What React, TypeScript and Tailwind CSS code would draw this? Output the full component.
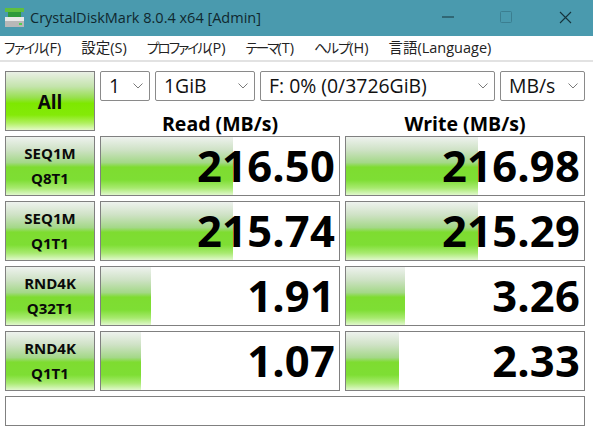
const FONT = "font-['Open_Sans','Noto_Sans_CJK_JP',sans-serif]";
const GRAD = "bg-[linear-gradient(180deg,#eef2ee_0%,#cfe2c6_22%,#a4d888_44%,#7edc30_52%,#7ede34_74%,#a8ea70_88%,#e0f8cc_100%)]";
const GRAD_ALL = "bg-[linear-gradient(180deg,#eaf0e6_0%,#c4e4ac_25%,#98e050_44%,#7ee800_54%,#84ea08_74%,#b0f060_88%,#e4fac8_100%)]";

function Chevron() {
  return (
    <svg width="10" height="6" viewBox="0 0 10 6" className="shrink-0">
      <path d="M0.5 0.5L5 5L9.5 0.5" fill="none" stroke="#7a7a7a" strokeWidth="1" />
    </svg>
  );
}

function Combo({ label, className }: { label: string; className: string }) {
  return (
    <div className={`h-[30px] flex items-center justify-between bg-white border border-[#8a8a8a] rounded-[2px] pl-[8px] pr-[6px] text-[19.4px] text-[#111] ${className}`}>
      <span>{label}</span>
      <Chevron />
    </div>
  );
}

function Cell({ value, bar }: { value: string; bar: number }) {
  return (
    <div className="relative h-[60px] border border-[#808080] bg-white flex items-center justify-end overflow-hidden">
      <div className={`absolute left-0 top-0 bottom-0 ${GRAD}`} style={{ width: bar }} />
      <span className="relative text-[43.5px] leading-none font-bold text-black pr-[4px] tracking-[0.2px]">{value}</span>
    </div>
  );
}

function Label({ a, b }: { a: string; b: string }) {
  return (
    <div className={`h-[60px] border border-[#808080] flex flex-col items-center justify-center text-[15px] leading-[25px] font-bold text-[#0a0a0a] ${GRAD}`}>
      <span className="-mt-[1px]">{a}</span>
      <span>{b}</span>
    </div>
  );
}

const rows = [
  { a: "SEQ1M", b: "Q8T1", r: "216.50", rb: 132, w: "216.98", wb: 132 },
  { a: "SEQ1M", b: "Q1T1", r: "215.74", rb: 132, w: "215.29", wb: 132 },
  { a: "RND4K", b: "Q32T1", r: "1.91", rb: 50, w: "3.26", wb: 59 },
  { a: "RND4K", b: "Q1T1", r: "1.07", rb: 40, w: "2.33", wb: 53 },
];

const menus = [
  { k: "ファイル", l: "(F)", c: "text-[13.5px] tracking-[-1.4px]" },
  { k: "設定", l: "(S)", c: "" },
  { k: "プロファイル", l: "(P)", c: "text-[13.5px] tracking-[-1.8px]" },
  { k: "テーマ", l: "(T)", c: "text-[13.5px] tracking-[-1.9px]" },
  { k: "ヘルプ", l: "(H)", c: "text-[13.5px] tracking-[-1.2px]" },
  { k: "言語", l: "(Language)", c: "" },
];

export default function App() {
  return (
    <div className={`w-[593px] h-[434px] bg-white overflow-hidden flex flex-col ${FONT}`}>
      <div className="h-[36px] bg-[#4a9aae] flex items-center text-[#10282e] shrink-0">
        <svg width="20" height="22" viewBox="0 0 20 22" className="ml-[5px] mr-[5px]">
          <rect x="0" y="1" width="19" height="4" fill="#5fbf3f" />
          <rect x="3" y="5" width="13" height="5" fill="#2f9a3a" />
          <rect x="0" y="10" width="19" height="4" fill="#e8e8e8" />
          <rect x="0" y="14" width="19" height="6" fill="#b8b8b8" />
          <rect x="14" y="16" width="3" height="2" fill="#50d050" />
        </svg>
        <span className="text-[14.5px]">CrystalDiskMark 8.0.4 x64 [Admin]</span>
        <div className="ml-auto flex items-center mb-[2px]">
          <svg width="14" height="14" viewBox="0 0 14 14"><path d="M1 7H13" stroke="#16343c" strokeWidth="1" /></svg>
          <svg width="12" height="12" viewBox="0 0 12 12" className="ml-[45px]"><rect x="0.5" y="0.5" width="11" height="11" rx="1" fill="none" stroke="#3b7e90" strokeWidth="1" /></svg>
          <svg width="13" height="13" viewBox="0 0 13 13" className="ml-[47px] mr-[21px]"><path d="M1 1L12 12M12 1L1 12" stroke="#16343c" strokeWidth="1.1" /></svg>
        </div>
      </div>
      <div className="h-[26px] shrink-0 flex items-center border-b-2 border-[#e2e2e2] text-[14.5px] text-[#222] pl-[4px] gap-[20px] [font-feature-settings:'palt']">
        {menus.map((m) => (
          <span key={m.k} className="whitespace-nowrap">
            <span className={m.c}>{m.k}</span>
            {m.l}
          </span>
        ))}
      </div>
      <div className="grid grid-cols-[90px_240px_240px] gap-x-[5px] pl-[5px] pt-[9px]">
        <div className={`h-[60px] border border-[#808080] flex items-center justify-center pt-[3px] text-[19px] font-bold text-[#0a0a0a] ${GRAD_ALL}`}>All</div>
        <div className="col-span-2 flex flex-col">
          <div className="flex gap-[5px]">
            <Combo label="1" className="w-[50px]" />
            <Combo label="1GiB" className="w-[100px]" />
            <Combo label="F: 0% (0/3726GiB)" className="w-[235px]" />
            <Combo label="MB/s" className="w-[85px]" />
          </div>
          <div className="grid grid-cols-2 gap-x-[5px] h-[30px] items-center pt-[13px] text-center text-[19.5px] leading-none font-bold text-black">
            <span>Read (MB/s)</span>
            <span>Write (MB/s)</span>
          </div>
        </div>
      </div>
      <div className="grid grid-cols-[90px_240px_240px] gap-[5px] pl-[5px] pt-[5px]">
        {rows.map((r) => (
          <div key={r.a + r.b} className="contents">
            <Label a={r.a} b={r.b} />
            <Cell value={r.r} bar={r.rb} />
            <Cell value={r.w} bar={r.wb} />
          </div>
        ))}
      </div>
      <div className="ml-[5px] mt-[5px] w-[580px] h-[30px] border border-[#808080] bg-white" />
    </div>
  );
}
